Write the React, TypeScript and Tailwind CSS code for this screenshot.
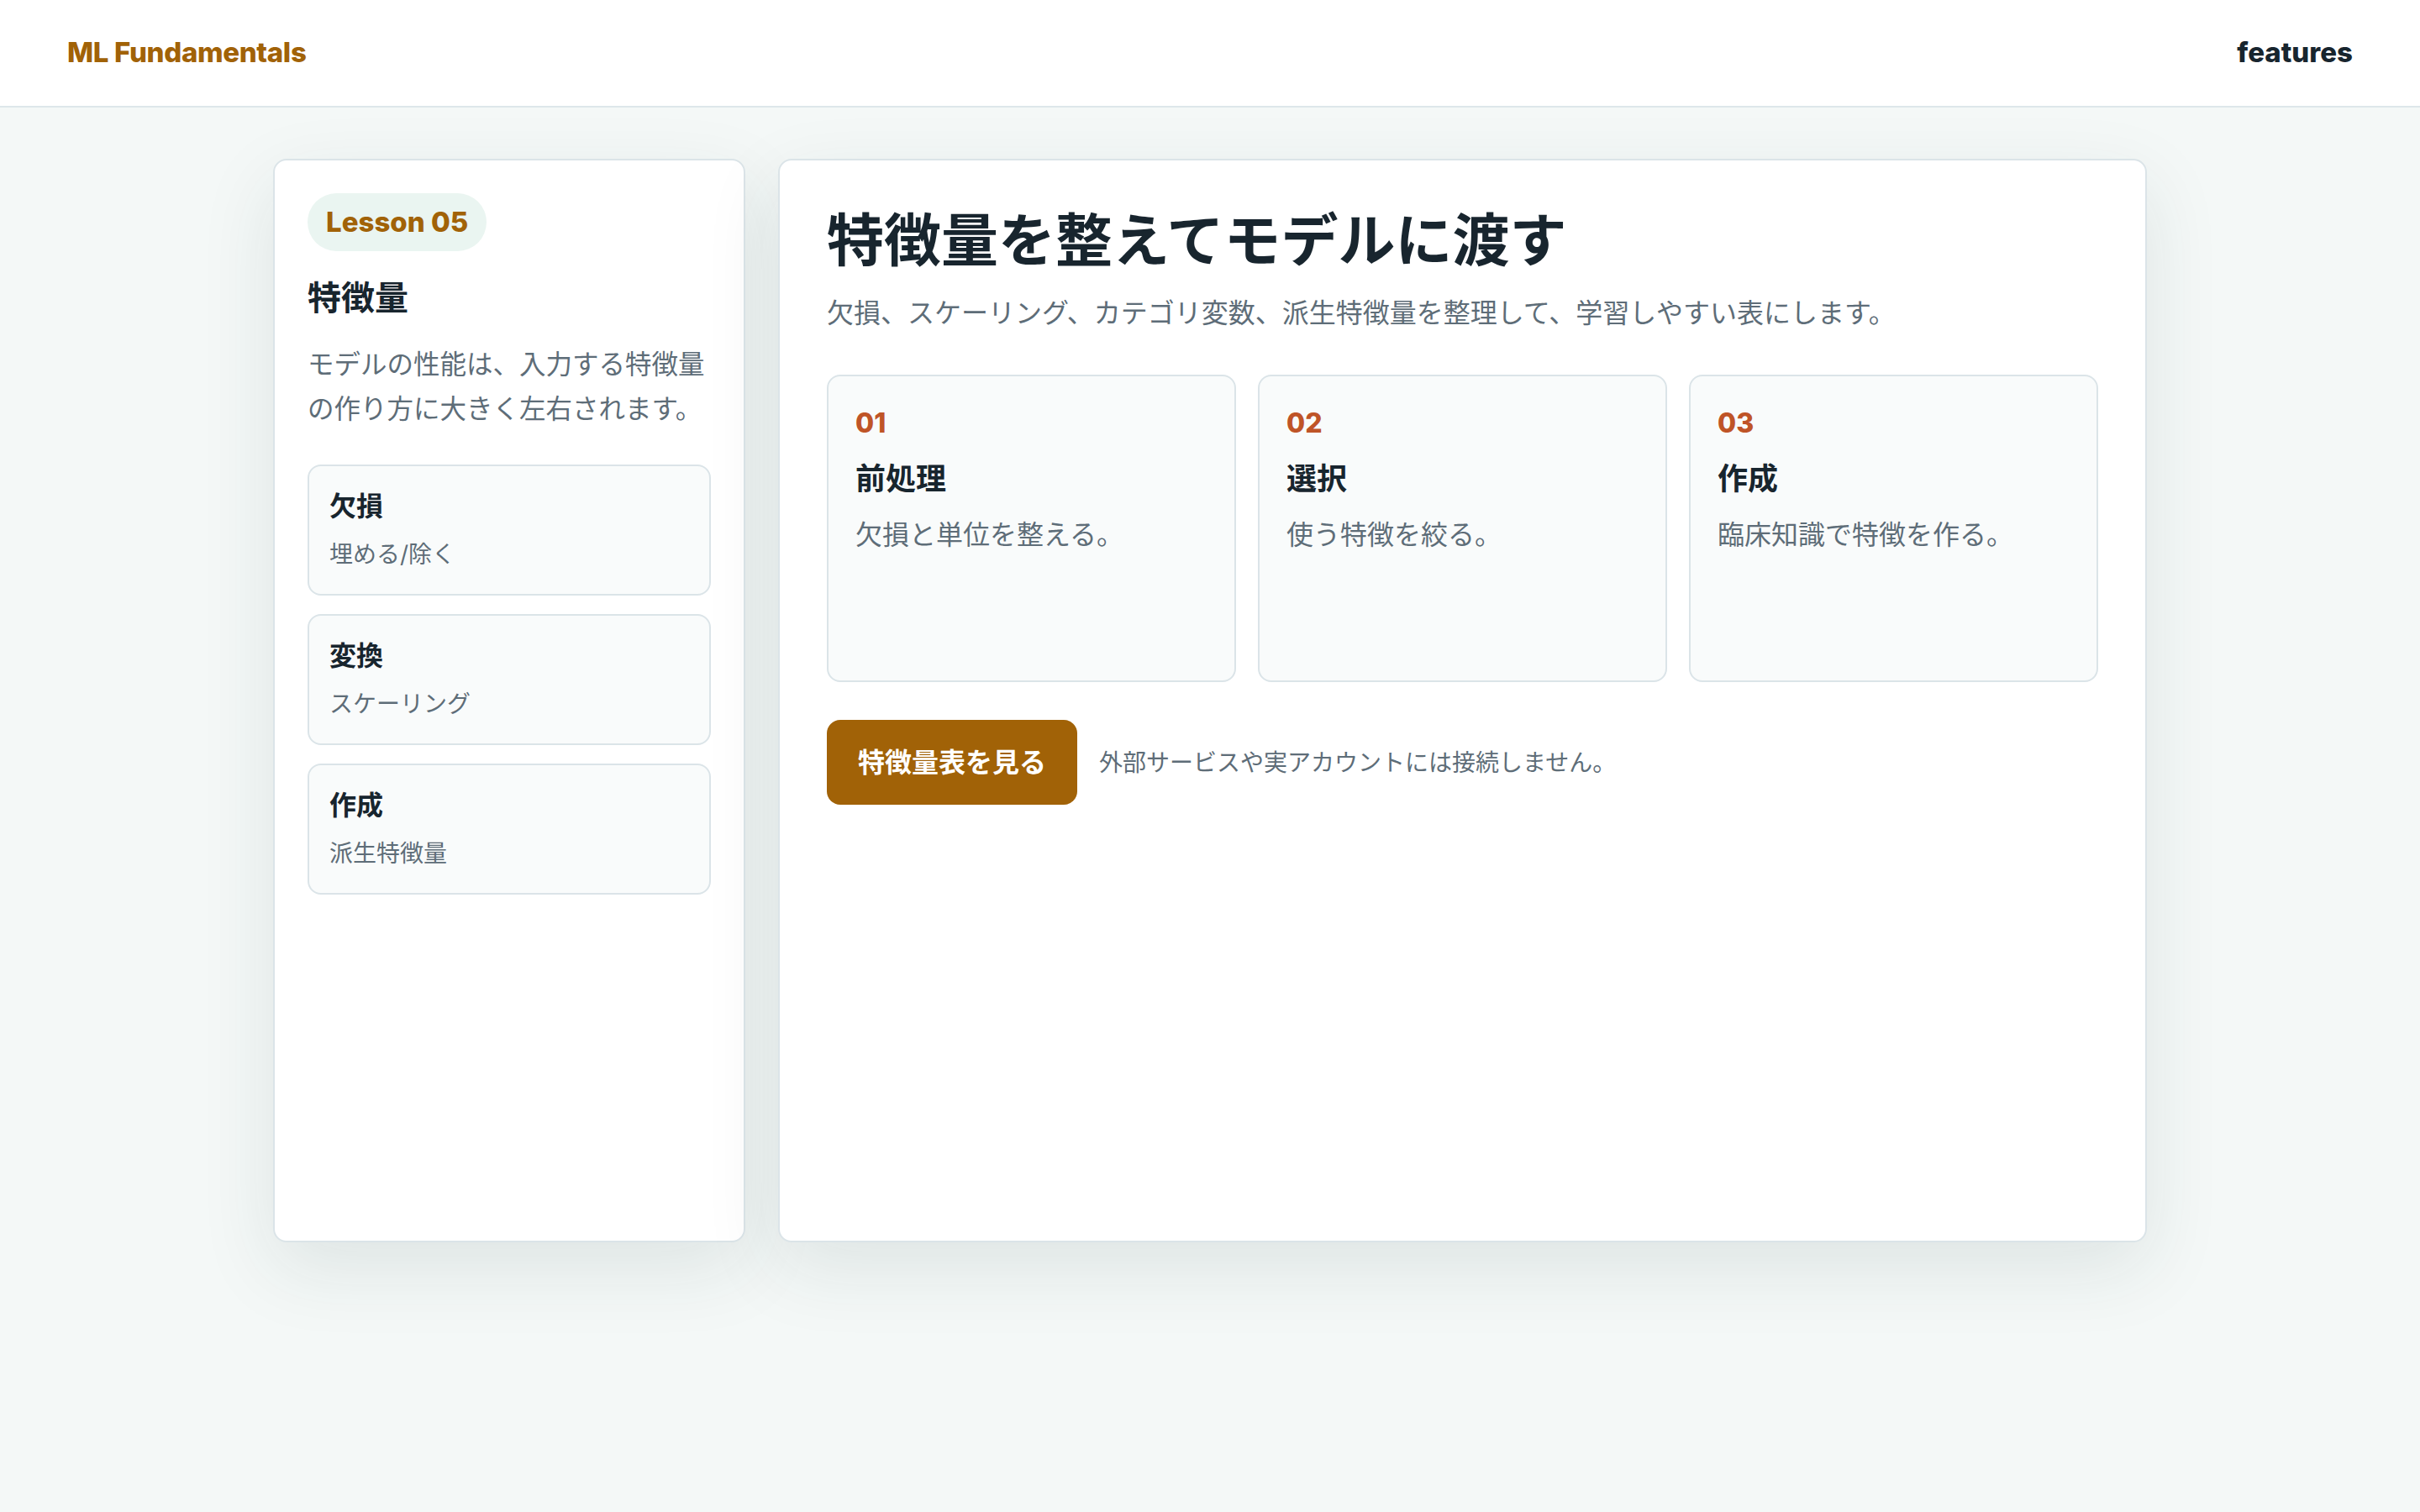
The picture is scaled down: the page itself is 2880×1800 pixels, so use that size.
import React from "react";

const FONT = { fontFamily: '"Inter", "Noto Sans CJK JP", sans-serif' };

const items = [
  { t: "欠損", s: "埋める/除く" },
  { t: "変換", s: "スケーリング" },
  { t: "作成", s: "派生特徴量" },
];

const steps = [
  { n: "01", t: "前処理", d: "欠損と単位を整える。" },
  { n: "02", t: "選択", d: "使う特徴を絞る。" },
  { n: "03", t: "作成", d: "臨床知識で特徴を作る。" },
];

export default function App() {
  return (
    <div className="min-h-screen bg-[#f4f8f7] text-[#18252e]" style={FONT}>
      <header className="h-[128px] bg-white border-b-2 border-[#dde7ea] flex items-center justify-between px-[80px]">
        <div className="text-[33px] font-extrabold text-[#a16207] tracking-[-0.01em]">ML Fundamentals</div>
        <div className="text-[33px] font-extrabold text-[#18252e]">features</div>
      </header>
      <main className="pt-[61px] pb-[320px]">
        <div className="grid grid-cols-[562px_1629px] gap-[39px] justify-center min-h-[1290px]">
          <aside className="bg-white border-2 border-[#dbe4e8] rounded-[16px] p-[39px] flex flex-col items-start shadow-[0_30px_90px_rgba(30,56,60,0.10)]">
            <div className="h-[69px] px-[22px] rounded-full bg-[#eaf5f1] flex items-center text-[33px] font-extrabold text-[#a16207]">
              Lesson 05
            </div>
            <h2 className="mt-[30px] text-[40px] leading-[52px] font-bold text-[#18252e]">特徴量</h2>
            <p className="mt-[26px] text-[31.5px] leading-[53px] text-[#5e6d78]">
              モデルの性能は、入力する特徴量の作り方に大きく左右されます。
            </p>
            <div className="mt-[40px] w-full flex flex-col gap-[22px]">
              {items.map((it) => (
                <div
                  key={it.t}
                  className="w-full border-2 border-[#dbe4e8] rounded-[16px] bg-[#f9fbfb] px-[24px] py-[26px] flex flex-col"
                >
                  <div className="text-[32px] leading-[44px] font-bold text-[#18252e]">{it.t}</div>
                  <div className="mt-[14px] text-[28px] leading-[42px] text-[#5e6d78]">{it.s}</div>
                </div>
              ))}
            </div>
          </aside>
          <section className="bg-white border-2 border-[#dbe4e8] rounded-[16px] px-[56px] pt-[54px] pb-[56px] flex flex-col shadow-[0_30px_90px_rgba(30,56,60,0.10)]">
            <h1 className="text-[68px] leading-[82px] font-bold text-[#18252e]">特徴量を整えてモデルに渡す</h1>
            <p className="mt-[20px] text-[32px] leading-[51px] text-[#5e6d78]">
              欠損、スケーリング、カテゴリ変数、派生特徴量を整理して、学習しやすい表にします。
            </p>
            <div className="mt-[48px] grid grid-cols-3 gap-[26px]">
              {steps.map((s) => (
                <div
                  key={s.n}
                  className="h-[366px] border-2 border-[#dbe4e8] rounded-[16px] bg-[#f9fbfb] px-[32px] pt-[32px]"
                >
                  <div className="text-[32px] leading-[48px] font-extrabold text-[#bf5427]">{s.n}</div>
                  <div className="mt-[19px] text-[36px] leading-[47px] font-bold text-[#18252e]">{s.t}</div>
                  <div className="mt-[19px] text-[32px] leading-[48px] text-[#5e6d78]">{s.d}</div>
                </div>
              ))}
            </div>
            <div className="mt-[45px] flex items-center gap-[26px]">
              <button className="h-[101px] px-[37px] rounded-[16px] bg-[#a16207] text-white text-[32px] font-bold">
                特徴量表を見る
              </button>
              <span className="text-[28px] text-[#5e6d78]">外部サービスや実アカウントには接続しません。</span>
            </div>
          </section>
        </div>
      </main>
    </div>
  );
}
